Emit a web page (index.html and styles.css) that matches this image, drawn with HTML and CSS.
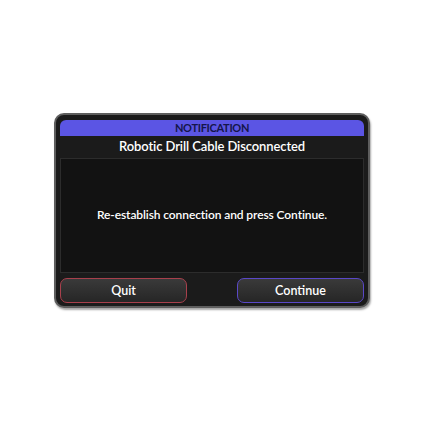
FILE: index.html
```html
<!DOCTYPE html>
<html>
<head>
<meta charset="utf-8">
<link rel="stylesheet" href="styles.css">
</head>
<body>
<div class="dialog">
  <div class="header">NOTIFICATION</div>
  <div class="title">Robotic Drill Cable Disconnected</div>
  <div class="panel">Re-establish connection and press Continue.</div>
  <div class="actions">
    <div class="btn quit">Quit</div>
    <div class="btn cont">Continue</div>
  </div>
</div>
</body>
</html>
```

FILE: styles.css
```css
html, body { margin: 0; padding: 0; background: #ffffff; }
body { width: 424px; height: 424px; font-family: Lato, "Open Sans", "Liberation Sans", sans-serif; }
.dialog {
  box-sizing: border-box;
  margin: 113px 0 0 54px;
  width: 316px;
  height: 195px;
  background: #1b1b1b;
  border: 2px solid #5e5e5e;
  border-radius: 10px;
  padding: 5px 4px 3px 4px;
  display: flex;
  flex-direction: column;
  box-shadow: 1px 2px 2px rgba(0,0,0,0.35);
}
.header {
  height: 16px;
  background: #5b55e4;
  border-radius: 6px 6px 0 0;
  color: #15154a;
  font-size: 11px;
  font-weight: 700;
  line-height: 16px;
  text-align: center;
  letter-spacing: -0.3px;
}
.title {
  height: 22px;
  line-height: 20px;
  color: #ffffff;
  text-align: center;
  font-size: 13px;
  font-weight: 600;
  letter-spacing: -0.1px;
}
.panel {
  height: 115px;
  box-sizing: border-box;
  background: #121212;
  border: 1px solid #2c2c2c;
  color: #ffffff;
  font-size: 12px;
  font-weight: 600;
  letter-spacing: -0.1px;
  display: flex;
  align-items: center;
  justify-content: center;
  padding-bottom: 2px;
}
.actions {
  margin-top: 5px;
  display: flex;
  justify-content: space-between;
}
.btn {
  box-sizing: border-box;
  width: 127px;
  height: 25px;
  border-radius: 7px;
  background: linear-gradient(#3a3a3a, #262626);
  color: #ffffff;
  font-size: 12.5px;
  font-weight: 600;
  display: flex;
  align-items: center;
  justify-content: center;
}
.quit { border: 1.5px solid #a8404c; }
.cont { border: 1.5px solid #5a48c8; }
```
